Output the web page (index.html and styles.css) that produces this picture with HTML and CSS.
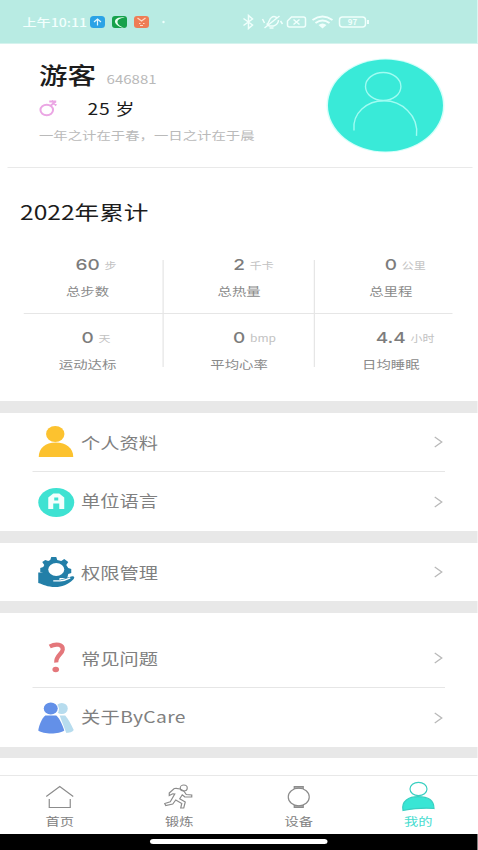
FILE: index.html
```html
<!DOCTYPE html>
<html lang="zh-CN">
<head>
<meta charset="utf-8">
<title>我的</title>
<link rel="stylesheet" href="styles.css">
</head>
<body>
<div class="screen">
  <header class="status">
    <span class="clock">上午10:11</span>
    <svg class="apps" viewBox="0 0 80 14" preserveAspectRatio="none">
      <rect x="0" y="1" width="15" height="12" rx="3.5" fill="#2ba3e6"/>
      <path d="M7.5 10.5V4M4 7l3.500-3 3.500 3" fill="none" stroke="#e4f7ff" stroke-width="1.200"/>
      <rect x="22" y="1" width="15" height="12" rx="3" fill="#17a14c"/>
      <path d="M35 2.500C27 1.500 23 5 26 9c2 2.500 5 3.500 8 4-4-2-6.500-3.500-6.500-6s3-4 7.500-4.500z" fill="#e9fff0"/>
      <rect x="44" y="1" width="15" height="12" rx="3" fill="#ee7d55"/>
      <path d="M47.500 3l4 3 4-3M49 8.500h1.500M53 8.500h1.500M50 10.500h3" fill="none" stroke="#ffd9c6" stroke-width="1.200"/>
      <circle cx="73.500" cy="7" r="1.200" fill="#effffc"/>
    </svg>
    <svg class="signals" viewBox="0 0 128 16" preserveAspectRatio="none">
      <g fill="none" stroke="#f0fffc" stroke-width="1.500">
        <path d="M1 4.500l9 6.500-4 3.500V1.500L10 5l-9 6.500"/>
        <path d="M24 10.500c3-1 2-5 5-7 2-1.500 5-1 6 1M36 6c0 3-2 5-5 6h-5M22 14L37 2M20 5l2 4M38 7l2 3M27 14h4"/>
        <path d="M49 3h12q2 0 2 2v6q0 2-2 2H47q-2 0-2-2V7z"/>
        <path d="M51 5.500l6 5M57 5.500l-6 5"/>
        <path d="M70 6q10-7 20 0M73 9q7-5 14 0" stroke-width="2"/>
        <rect x="97" y="3" width="26" height="10" rx="3"/>
        <path d="M125.500 6v4" stroke-width="2"/>
      </g>
      <path d="M76 11q4-3 8 0l-4 3.500z" fill="#f0fffc"/>
      <text x="110" y="11" text-anchor="middle" class="charge">97</text>
    </svg>
  </header>

  <section class="profile">
    <div class="who">
      <div class="name-row"><h1>游客</h1><span class="uid">646881</span></div>
      <div class="age-row">
        <svg class="gender" viewBox="0 0 18 17" preserveAspectRatio="none">
          <g fill="none" stroke="#eba6e4" stroke-width="2"><ellipse cx="8" cy="10" rx="6.300" ry="5.300"/><path d="M11.500 6L17 1.500M10.500 1.500h7M13 .5l4.500 5"/></g>
        </svg>
        <span class="age">25 岁</span>
      </div>
      <p class="motto">一年之计在于春，一日之计在于晨</p>
    </div>
    <svg class="avatar" viewBox="0 0 121 97" preserveAspectRatio="none">
      <ellipse cx="60.500" cy="48.500" rx="59" ry="47" fill="#d5fffa"/>
      <ellipse cx="60.500" cy="48.500" rx="57.500" ry="46" fill="#39ead8"/>
      <g fill="none" stroke="#9ffcf2" stroke-width="1.400"><ellipse cx="58.200" cy="29.500" rx="17.700" ry="14"/><path d="M29 73.500C27 56 42 43.800 59 43.800s35 14 32.500 35"/></g>
    </svg>
  </section>

  <section class="totals">
    <h2>2022年累计</h2>
    <div class="grid">
      <div class="cell"><b>60<i>步</i></b><span>总步数</span></div>
      <div class="cell"><b>2<i>千卡</i></b><span>总热量</span></div>
      <div class="cell"><b>0<i>公里</i></b><span>总里程</span></div>
    </div>
    <div class="grid-rule"></div>
    <div class="grid lower">
      <div class="cell"><b>0<i>天</i></b><span>运动达标</span></div>
      <div class="cell"><b>0<i>bmp</i></b><span>平均心率</span></div>
      <div class="cell"><b>4.4<i>小时</i></b><span>日均睡眠</span></div>
    </div>
  </section>

  <nav class="group">
    <div class="row">
      <svg class="icon" viewBox="0 0 40 36" preserveAspectRatio="none"><g fill="#fcc22f"><ellipse cx="19" cy="10" rx="9.200" ry="8"/><path d="M2.500 33C2.500 24 9 18.500 19.500 18.500S37 24 37 33z"/></g></svg>
      <span>个人资料</span><svg class="chev" viewBox="0 0 10 14" preserveAspectRatio="none"><path d="M1 2l7 5-7 5"/></svg>
    </div>
    <div class="row">
      <svg class="icon" viewBox="0 0 40 36" preserveAspectRatio="none"><ellipse cx="20" cy="18.500" rx="18" ry="14.500" fill="#3ee2d2"/><path d="M12 25V13.500l5-4h6l5 4V25h-5v-5.500h-6V25z" fill="#f3fffd"/><rect x="18" y="13.500" width="4" height="3" fill="#3ee2d2"/></svg>
      <span>单位语言</span><svg class="chev" viewBox="0 0 10 14" preserveAspectRatio="none"><path d="M1 2l7 5-7 5"/></svg>
    </div>
  </nav>

  <nav class="group">
    <div class="row">
      <svg class="icon" viewBox="0 0 40 36" preserveAspectRatio="none">
        <g fill="#237fa8"><path d="M14 6l1-3h5l1 3 4 1 3-2 4 3-2 3 2 3 3 1v4l-3 1-1 4H12L7 19l-3-1v-4l3-1 1-2-2-3 3-2 3 1z"/></g>
        <ellipse cx="20" cy="15.500" rx="8" ry="6.500" fill="#fff"/>
        <path d="M2 18.500h6c5 0 6 4.500 11 4.500 4 0 5 1 4 3l12-3.500c3-1 4 1 2 3C31 31 26 33 19 33c-8 0-12-2.500-17-4z" fill="#237fa8"/>
        <path d="M17 26.800h7c4-.3 7-1.500 10-3" fill="none" stroke="#fff" stroke-width="1.300"/>
      </svg>
      <span>权限管理</span><svg class="chev" viewBox="0 0 10 14" preserveAspectRatio="none"><path d="M1 2l7 5-7 5"/></svg>
    </div>
  </nav>

  <nav class="group help">
    <div class="row">
      <svg class="icon" viewBox="0 0 40 36" preserveAspectRatio="none"><path d="M13.500 6.500c6.500-3.500 13.500-2 13 3-.4 4.500-7 6-6.500 13" fill="none" stroke="#e4777b" stroke-width="4.200"/><ellipse cx="19.500" cy="29.500" rx="3.300" ry="2.700" fill="#e4777b"/></svg>
      <span>常见问题</span><svg class="chev" viewBox="0 0 10 14" preserveAspectRatio="none"><path d="M1 2l7 5-7 5"/></svg>
    </div>
    <div class="row">
      <svg class="icon" viewBox="0 0 40 36" preserveAspectRatio="none">
        <g fill="#b7dcee"><ellipse cx="25.500" cy="8.500" rx="6" ry="5.500"/><path d="M22 15.500h7c3 3.500 6 9 8.500 14.500-1 2-4 3-9 3z"/></g>
        <ellipse cx="14.800" cy="9" rx="8" ry="6.700" fill="#fff"/><path d="M6 14.500h17L30 33H20z" fill="#fff"/>
        <g fill="#6390e8"><ellipse cx="14.500" cy="8.500" rx="7" ry="5.900"/><path d="M9 15.500h11c3.500 3 6 9 8 15-5 4-21 4-26 0 1-6 3.500-12 7-15z"/></g>
      </svg>
      <span class="about">关于ByCare</span><svg class="chev" viewBox="0 0 10 14" preserveAspectRatio="none"><path d="M1 2l7 5-7 5"/></svg>
    </div>
  </nav>
  <div class="next-group"></div>

  <footer class="tabs">
    <div class="tab">
      <svg viewBox="0 0 36 32" preserveAspectRatio="none"><path d="M5 16.500L18.500 6.500l13.500 10M8 19v8.500h21V19"/></svg>
      <span>首页</span>
    </div>
    <div class="tab">
      <svg viewBox="0 0 36 32" preserveAspectRatio="none"><ellipse cx="22.500" cy="8" rx="3.500" ry="3"/><path d="M8 13l5-4.500c4-.5 7 .5 9.500 2.500l2.500 3.500 5.500.5v2l-7-.2-2.500-2-2.500 4 5.500 3.200-1.500 6h-3l1-4.500-6-3.500-3 4-7 1.500-1-2 5.500-1.800 4.500-7.700-2-.2-3.500 1.800z"/></svg>
      <span>锻炼</span>
    </div>
    <div class="tab">
      <svg viewBox="0 0 36 32" preserveAspectRatio="none"><ellipse cx="17.500" cy="17" rx="10.500" ry="8.800"/><path d="M13 9V6.500h9V9M13 25v2.500h9V25M13 7.800h9M13 26.200h9"/></svg>
      <span>设备</span>
    </div>
    <div class="tab active">
      <svg viewBox="0 0 36 32" preserveAspectRatio="none"><ellipse cx="18.500" cy="9" rx="8.500" ry="6.700"/><path d="M3 30.500C1 21 9 16.700 18 16.700S34 20 34 28.500c-8-.8-19-.2-31 2z" fill="#39e6d5"/></svg>
      <span>我的</span>
    </div>
  </footer>
  <div class="gesture"><div class="pill"></div></div>
</div>
</body>
</html>
```
FILE: styles.css
```css
* { box-sizing: border-box; }
body { margin: 0; background: #fff; overflow: hidden; }
h1, h2, p { margin: 0; font-weight: 400; }
svg { display: block; flex: none; }

.screen {
  width: 382.4px;
  height: 850px;
  transform: scaleX(1.25);
  transform-origin: 0 0;
  display: flex;
  flex-direction: column;
  font-family: "Noto Sans CJK SC", sans-serif;
  background: #fff;
  color: #1c1c1c;
  white-space: nowrap;
}

.status {
  height: 44px;
  flex: none;
  background: #b8ebe3;
  border-bottom: 1px solid #d5f3ee;
  display: flex;
  align-items: center;
  padding: 1px 0 0 18px;
}
.clock { width: 53.6px; font-size: 11.300px; font-weight: 500; color: #f2fffd; }
.apps { width: 64px; height: 14px; }
.signals { width: 102.400px; height: 16px; margin-left: 58px; }
.charge { font: 700 8px "Noto Sans CJK SC", sans-serif; fill: #f0fffc; }

.profile {
  height: 124px;
  flex: none;
  margin: 0 4px 0 5.600px;
  border-bottom: 1px solid #e9e9e9;
  display: flex;
  justify-content: space-between;
}
.who { padding: 13px 0 0 25.600px; }
.name-row { display: flex; height: 36px; line-height: 36px; }
h1 { font-size: 22.800px; font-weight: 500; }
.uid { margin-left: 8.500px; font-size: 12px; color: #b9b9b9; line-height: 44px; }
.age-row { display: flex; align-items: center; height: 30px; }
.gender { width: 14.400px; height: 17px; }
.age { margin-left: 24.500px; font-size: 15.400px; letter-spacing: .5px; }
.motto { height: 24px; line-height: 24px; font-size: 11.500px; color: #bababa; }
.avatar { width: 96.800px; height: 97px; margin: 13px 22px 0 0; }

.totals { height: 233px; flex: none; padding: 0 9.600px 0 8.800px; }
h2 { margin: 27px 0 0 7.200px; height: 34px; line-height: 34px; font-size: 19.700px; }
.grid { display: grid; grid-template-columns: repeat(3, 1fr); height: 53px; margin-top: 31px; }
.grid-rule { height: 1px; background: #e6e6e6; margin: 0 11.200px 0 10.400px; }
.cell { display: flex; flex-direction: column; align-items: center; height: 53px; padding-left: 1.200px; color: #8a8a8a; }
.cell + .cell { padding-left: 0; border-left: 1px solid #e6e6e6; }
.cell b { flex: none; font: 500 15.200px/20px Inter, "Noto Sans CJK SC", sans-serif; margin-top: -5px; height: 23px; color: #7c7c7c; display: flex; }
.cell i { width: 0; text-indent: 3.800px; font: 400 9.600px/20px "Noto Sans CJK SC", sans-serif; color: #c2c2c2; overflow: visible; }
.cell span { flex: none; font-size: 11.500px; line-height: 26px; }
.lower { margin-top: 0; }
.lower .cell b { margin-top: 14px; }

.group { flex: none; border-top: 12px solid #e8e8e8; }
.row {
  height: 58px;
  margin: 0 26px 0 25.600px;
  display: flex;
  align-items: center;
  color: #808080;
  font-size: 15.400px;
}
.row + .row { height: 60px; border-top: 1px solid #e6e6e6; }
.row span { margin-top: -1px; }
.row + .row span { margin-top: -3px; }
.row .about { letter-spacing: .3px; }
.icon { width: 32px; height: 36px; margin: 0 4px 0 3.200px; }
.chev { width: 8px; height: 14px; margin-left: auto; margin-right: 1px; }
.chev path { fill: none; stroke: #b9b9b9; stroke-width: 1.300; }
.help { padding-top: 16px; }
.next-group { flex: 1; border-top: 11px solid #e8e8e8; }

.tabs {
  height: 59px;
  flex: none;
  border-top: 1px solid #e8e8e8;
  display: grid;
  grid-template-columns: repeat(4, 1fr);
}
.tab { display: flex; flex-direction: column; align-items: center; padding-top: 4px; font-size: 11.400px; line-height: 18px; color: #828282; }
.tab svg { width: 28.800px; height: 32px; fill: none; stroke: #8c8c8c; stroke-width: 1.200; }
.active { color: #48dccf; }
.tab.active svg { stroke: #39cfc1; }
.gesture { height: 16px; flex: none; background: #000; padding-top: 5px; }
.pill { width: 141.600px; height: 5px; margin: 0 auto; border-radius: 3px; background: #fff; }
```
